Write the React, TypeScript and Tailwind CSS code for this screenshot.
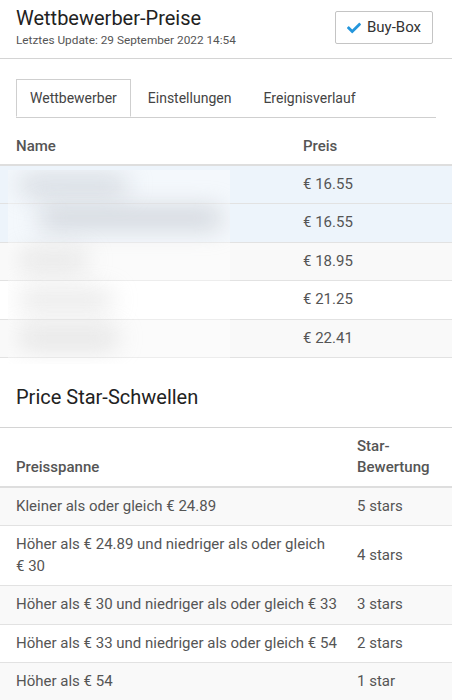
import { FaCheck } from "react-icons/fa";

const competitors = [
  { price: "€\u00a016.55", own: true },
  { price: "€\u00a016.55", own: true },
  { price: "€\u00a018.95", own: false },
  { price: "€\u00a021.25", own: false },
  { price: "€\u00a022.41", own: false },
];

const thresholds = [
  { range: "Kleiner als oder gleich €\u00a024.89", stars: "5 stars" },
  { range: "Höher als €\u00a024.89 und niedriger als oder gleich €\u00a030", stars: "4 stars" },
  { range: "Höher als €\u00a030 und niedriger als oder gleich €\u00a033", stars: "3 stars" },
  { range: "Höher als €\u00a033 und niedriger als oder gleich €\u00a054", stars: "2 stars" },
  { range: "Höher als €\u00a054", stars: "1 star" },
];

function rowBg(i: number, own: boolean) {
  if (own) return "bg-[#edf4fb]";
  return i % 2 === 0 ? "bg-[#f9f9f9]" : "bg-white";
}

export default function App() {
  return (
    <div className="w-[452px] h-[700px] overflow-hidden bg-white text-[#555] font-['Roboto',sans-serif]">
      {/* header */}
      <div className="flex items-start justify-between px-4 pt-[4px] h-[59px] border-b border-[#d4d4d4]">
        <div>
          <h1 className="text-[20px] leading-[28px] text-[#222]">Wettbewerber-Preise</h1>
          <p className="text-[11.8px] leading-[16px] text-[#555]">
            Letztes Update: 29 September 2022 14:54
          </p>
        </div>
        <button className="mt-[7px] mr-[3px] h-[33px] w-[98px] flex items-center justify-center gap-[6px] border border-[#c4c4c4] rounded-[2px] bg-white text-[15px] text-[#333]">
          <FaCheck className="text-[#2496dc] w-[14px] h-[14px]" />
          Buy-Box
        </button>
      </div>

      {/* tabs */}
      <div className="px-4 pt-[20px]">
        <div className="flex border-b border-[#cfcfcf] text-[14px] leading-[20px] text-[#444]">
          <div className="px-[13px] py-[8px] h-[38px] -mb-px bg-white border border-[#cfcfcf] border-b-white">
            Wettbewerber
          </div>
          <div className="px-[16px] py-[8px] h-[38px] border border-transparent">Einstellungen</div>
          <div className="px-[14px] py-[8px] h-[38px] border border-transparent">Ereignisverlauf</div>
        </div>
      </div>

      {/* competitors table */}
      <div className="mt-[10px] text-[15px]">
        <div className="grid grid-cols-[287px_1fr] border-b-2 border-[#dedede] font-medium">
          <div className="px-4 py-2 leading-[20px]">Name</div>
          <div className="px-4 py-2 leading-[20px]">Preis</div>
        </div>
        <div className="relative">
          {competitors.map((c, i) => (
            <div
              key={i}
              className={`grid grid-cols-[287px_1fr] border-b border-[#e2e2e2] last:border-b-0 ${rowBg(i, c.own)}`}
            >
              <div className="px-4 py-2 leading-[21.4px]">&nbsp;</div>
              <div className="px-4 py-2 leading-[21.4px]">{c.price}</div>
            </div>
          ))}
          {/* blurred names */}
          <div className="absolute left-[8px] top-[4px] w-[222px] h-[194px] bg-white/40 overflow-hidden">
            <div className="absolute left-[10px] top-[6px] w-[110px] h-[18px] rounded-full bg-[#b4b9c2]/55 blur-md" />
            <div className="absolute left-[30px] top-[38px] w-[185px] h-[20px] rounded-full bg-[#b4b9c2]/60 blur-md" />
            <div className="absolute left-[10px] top-[82px] w-[70px] h-[16px] rounded-full bg-[#c4c4c4]/50 blur-md" />
            <div className="absolute left-[10px] top-[122px] w-[95px] h-[16px] rounded-full bg-[#c4c4c4]/50 blur-md" />
            <div className="absolute left-[10px] top-[160px] w-[100px] h-[16px] rounded-full bg-[#bdbdbd]/50 blur-md" />
          </div>
        </div>
      </div>

      {/* star thresholds */}
      <div className="px-4 pt-[25px] pb-4 border-b border-[#d4d4d4]">
        <h2 className="text-[20px] leading-[28px] text-[#222]">Price Star-Schwellen</h2>
      </div>
      <div className="text-[15px]">
        <div className="grid grid-cols-[357px_1fr] border-b-2 border-[#dedede] font-medium items-end">
          <div className="px-4 py-2 leading-[21px]">Preisspanne</div>
          <div className="pr-4 py-2 leading-[21px]">
            Star-
            <br />
            Bewertung
          </div>
        </div>
        {thresholds.map((t, i) => (
          <div
            key={i}
            className={`grid grid-cols-[357px_1fr] items-center border-b border-[#e2e2e2] ${
              i % 2 === 0 ? "bg-[#f9f9f9]" : "bg-white"
            }`}
          >
            <div className="pl-4 pr-3 py-2 leading-[21.4px]">{t.range}</div>
            <div className="pr-4 py-2 leading-[21.4px]">{t.stars}</div>
          </div>
        ))}
      </div>
    </div>
  );
}
